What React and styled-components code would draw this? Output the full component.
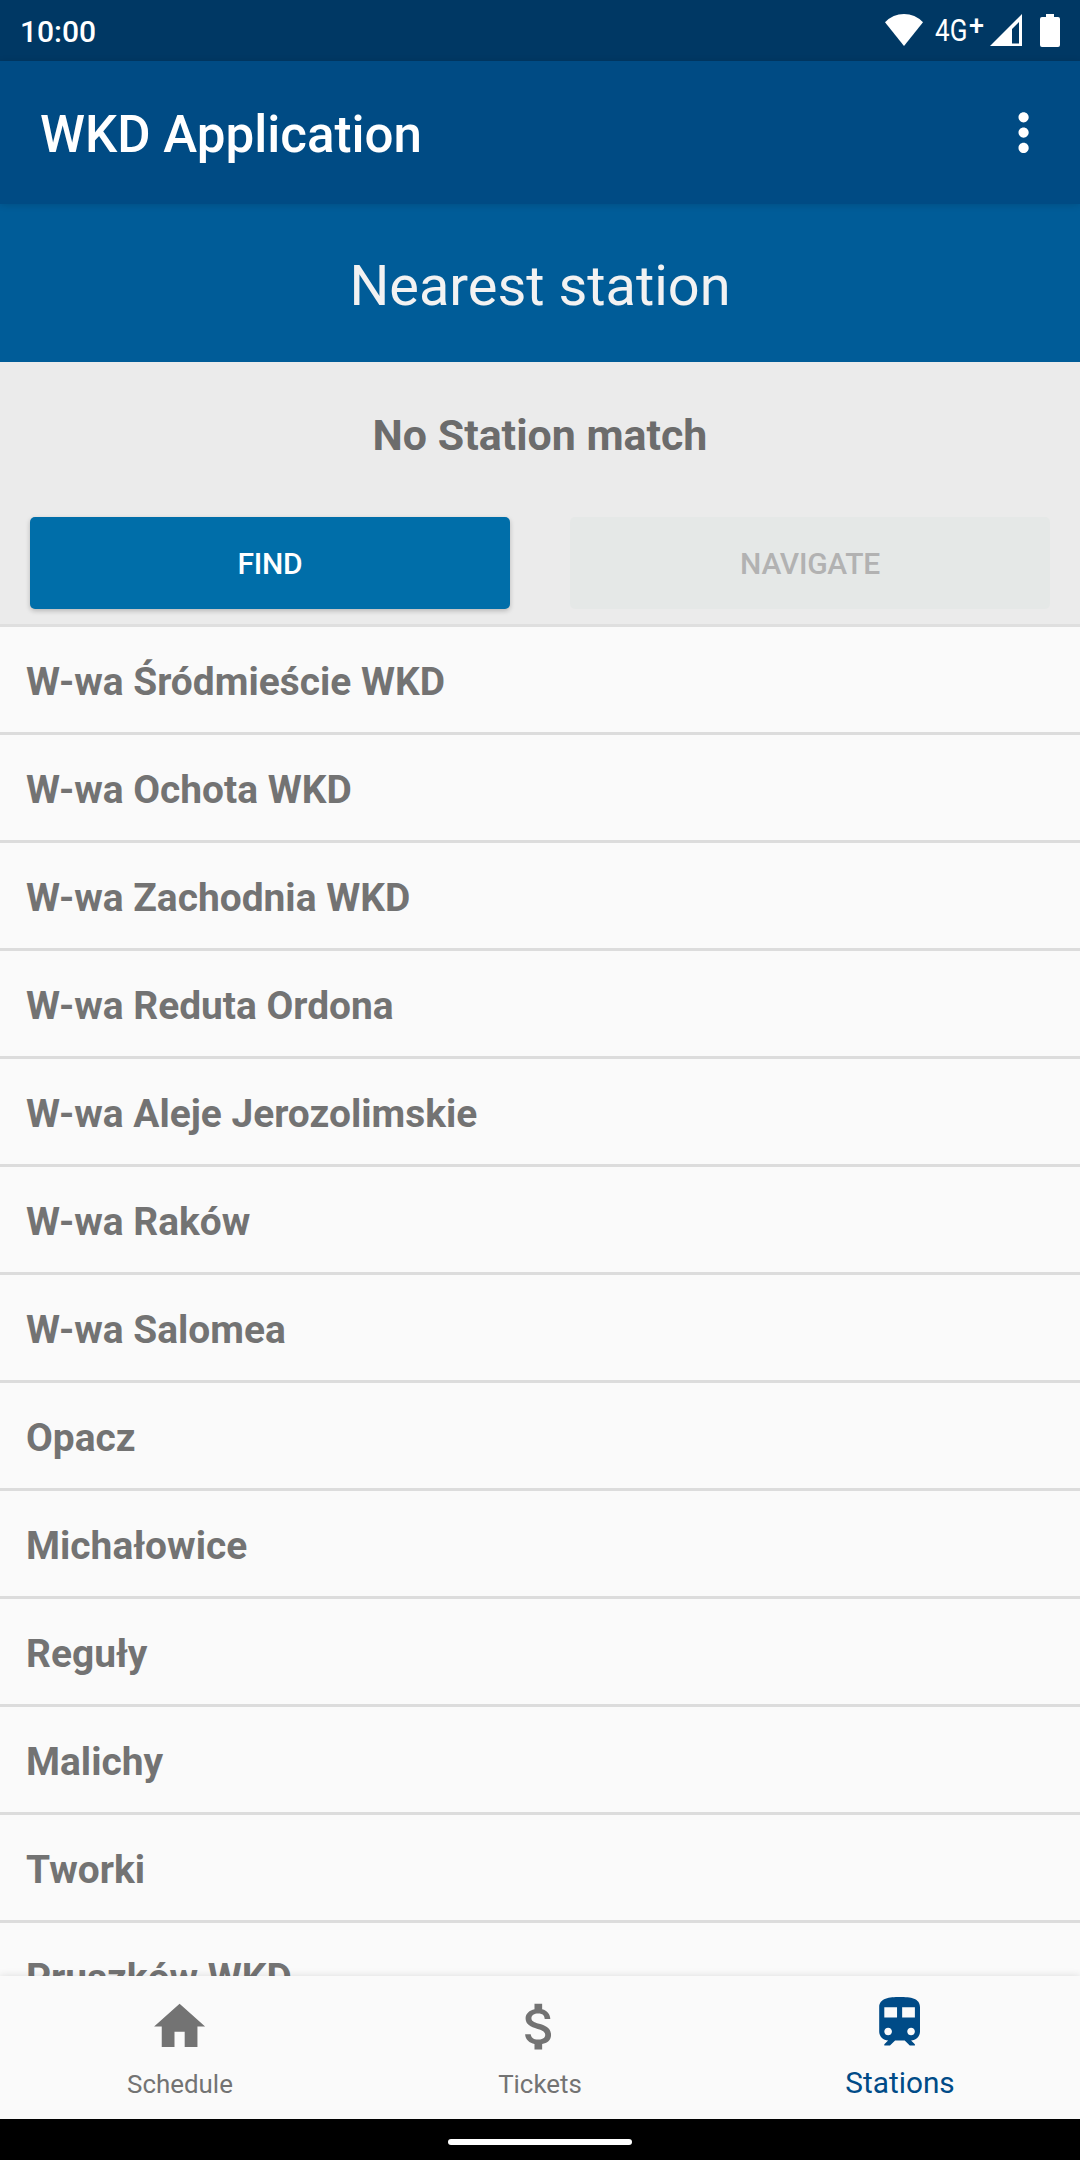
import React from 'react';
import styled, { createGlobalStyle } from 'styled-components';

const GlobalStyle = createGlobalStyle`
  * { box-sizing: border-box; }
  body { margin: 0; background: #fafafa; }
`;

const Screen = styled.div`
  display: flex;
  flex-direction: column;
  width: 1080px;
  height: 2160px;
  overflow: hidden;
  background: #fafafa;
  font-family: Roboto, 'Liberation Sans', sans-serif;
`;

const StatusBar = styled.header`
  display: flex;
  flex: none;
  align-items: flex-start;
  justify-content: space-between;
  height: 61px;
  padding: 14px 20px 0 20px;
  background: #003864;
  color: #fff;
`;

const Clock = styled.span`
  font-size: 30px;
  font-weight: 500;
  line-height: 36px;
`;

const StatusIcons = styled.div`
  display: flex;
  align-items: flex-start;

  svg { display: block; }
`;

const Network = styled.span`
  display: flex;
  width: 49px;
  margin: 0 6px 0 12px;
  line-height: 34px;
`;

const NetworkType = styled.span`
  width: 34px;
  font-size: 31px;
  transform: scaleX(0.84);
  transform-origin: left;
`;

const NetworkPlus = styled.span`
  font-size: 27px;
  font-weight: 500;
  line-height: 24px;
`;

const AppBar = styled.div`
  display: flex;
  flex: none;
  align-items: center;
  justify-content: space-between;
  height: 143px;
  padding: 0 26px 0 40px;
  background: #004b84;
  color: #fff;
  box-shadow: 0 1px 7px rgba(0, 0, 0, 0.14);
  z-index: 1;
`;

const AppTitle = styled.h1`
  margin: 4px 0 0;
  font-size: 51.1px;
  font-weight: 500;
  line-height: 60px;
`;

const MenuButton = styled.button`
  display: flex;
  padding: 0;
  border: 0;
  background: none;
  color: inherit;
`;

const SectionHeader = styled.h2`
  flex: none;
  height: 158px;
  margin: 0;
  background: #005c98;
  color: #f2f2f2;
  font-size: 55.9px;
  font-weight: 400;
  line-height: 164px;
  text-align: center;
`;

const NearestPanel = styled.section`
  flex: none;
  height: 265px;
  border-bottom: 3px solid #dfdfdf;
  background: #ebebeb;
`;

const MatchText = styled.p`
  height: 155px;
  margin: 0;
  color: #6c6c6c;
  font-size: 42.9px;
  font-weight: 700;
  line-height: 146px;
  text-align: center;
`;

const Actions = styled.div`
  display: grid;
  grid-template-columns: 480px 480px;
  justify-content: space-between;
  padding: 0 30px;
`;

const ActionButton = styled.button`
  height: 92px;
  padding: 0;
  border: 0;
  border-radius: 5px;
  background: ${(p) => (p.disabled ? '#e5e8e7' : '#006ea9')};
  color: ${(p) => (p.disabled ? '#b2b2b2' : '#fff')};
  box-shadow: ${(p) => (p.disabled ? 'none' : '0 2px 5px rgba(0, 0, 0, 0.22)')};
  font-family: inherit;
  font-size: 30px;
  font-weight: 500;
  letter-spacing: -0.25px;
`;

const StationList = styled.ul`
  flex: 1;
  min-height: 0;
  margin: 0;
  padding: 0;
  overflow: hidden;
  list-style: none;
`;

const StationRow = styled.li`
  height: 108px;
  padding: 3px 26px 0;
  border-bottom: 3px solid #dcdcdc;
  color: #737373;
  font-size: 38.9px;
  font-weight: 700;
  line-height: 104px;
`;

const BottomNav = styled.nav`
  display: grid;
  flex: none;
  grid-template-columns: repeat(3, 1fr);
  height: 143px;
  background: #fafafa;
  box-shadow: 0 0 8px rgba(0, 0, 0, 0.12);
  z-index: 1;
`;

const NavItem = styled.a`
  display: flex;
  flex-direction: column;
  align-items: center;
  padding-top: ${(p) => (p.$active ? '16px' : '20px')};
  color: ${(p) => (p.$active ? '#004b87' : '#737373')};

  svg { display: block; }
`;

const NavLabel = styled.span`
  margin-top: ${(p) => (p.$active ? '12px' : '11px')};
  font-size: ${(p) => (p.$active ? '29.8px' : '25.9px')};
  line-height: ${(p) => (p.$active ? '36px' : '32px')};
`;

const GestureBar = styled.footer`
  display: flex;
  flex: none;
  justify-content: center;
  height: 41px;
  padding-top: 20px;
  background: #000;
`;

const GesturePill = styled.div`
  width: 184px;
  height: 6px;
  border-radius: 3px;
  background: #fff;
`;

const Icon = ({ d }) => (
  <svg width="61.2" height="61.2" viewBox="0 0 24 24" fill="currentColor">
    <path d={d} />
  </svg>
);

const icons = {
  more: 'M12 8c1.1 0 2-.9 2-2s-.9-2-2-2-2 .9-2 2 .9 2 2 2zm0 2c-1.1 0-2 .9-2 2s.9 2 2 2 2-.9 2-2-.9-2-2-2zm0 6c-1.1 0-2 .9-2 2s.9 2 2 2 2-.9 2-2-.9-2-2-2z',
  home: 'M10 20v-6h4v6h5v-8h3L12 3 2 12h3v8z',
  money: 'M11.8 10.9c-2.27-.59-3-1.2-3-2.15 0-1.09 1.01-1.85 2.7-1.85 1.78 0 2.44.85 2.5 2.1h2.21c-.07-1.72-1.12-3.3-3.21-3.81V3h-3v2.16c-1.94.42-3.5 1.68-3.5 3.61 0 2.31 1.91 3.46 4.7 4.13 2.5.6 3 1.48 3 2.41 0 .69-.49 1.79-2.7 1.79-2.06 0-2.87-.92-2.98-2.1h-2.2c.12 2.19 1.76 3.42 3.68 3.83V21h3v-2.15c1.95-.37 3.5-1.5 3.5-3.55 0-2.84-2.43-3.81-4.7-4.4z',
  train: 'M12 2c-4 0-8 .5-8 4v9.5C4 17.43 5.57 19 7.5 19L6 20.5v.5h2.23l2-2H14l2 2h2v-.5L16.5 19c1.93 0 3.5-1.57 3.5-3.5V6c0-3.5-3.58-4-8-4zM7.5 17c-.83 0-1.5-.67-1.5-1.5S6.67 14 7.5 14s1.5.67 1.5 1.5S8.33 17 7.5 17zm3.5-7H6V6h5v4zm2 0V6h5v4h-5zm3.5 7c-.83 0-1.5-.67-1.5-1.5s.67-1.5 1.5-1.5 1.5.67 1.5 1.5-.67 1.5-1.5 1.5z',
};

const stations = [
  'W-wa Śródmieście WKD',
  'W-wa Ochota WKD',
  'W-wa Zachodnia WKD',
  'W-wa Reduta Ordona',
  'W-wa Aleje Jerozolimskie',
  'W-wa Raków',
  'W-wa Salomea',
  'Opacz',
  'Michałowice',
  'Reguły',
  'Malichy',
  'Tworki',
  'Pruszków WKD',
];

const tabs = [
  { label: 'Schedule', icon: icons.home },
  { label: 'Tickets', icon: icons.money },
  { label: 'Stations', icon: icons.train, active: true },
];

export default function App() {
  return (
    <Screen>
      <GlobalStyle />
      <StatusBar>
        <Clock>10:00</Clock>
        <StatusIcons>
          <svg width="38" height="32" viewBox="0 0 38 32" fill="#fff">
            <path d="M0 8.2Q8 0 19 0T38 8.2L19 32z" />
          </svg>
          <Network>
            <NetworkType>4G</NetworkType>
            <NetworkPlus>+</NetworkPlus>
          </Network>
          <svg width="32" height="32" viewBox="0 0 32 32" fill="#fff">
            <path fillRule="evenodd" d="M32 0v32H0zM29 8l-7 7v14.5h7z" />
          </svg>
          <svg width="38" height="33" viewBox="0 0 38 33" fill="#fff">
            <path d="M24 0h8v3h4a2 2 0 0 1 2 2v26a2 2 0 0 1-2 2H20a2 2 0 0 1-2-2V5a2 2 0 0 1 2-2h4z" />
          </svg>
        </StatusIcons>
      </StatusBar>
      <AppBar>
        <AppTitle>WKD Application</AppTitle>
        <MenuButton aria-label="More options">
          <Icon d={icons.more} />
        </MenuButton>
      </AppBar>
      <SectionHeader>Nearest station</SectionHeader>
      <NearestPanel>
        <MatchText>No Station match</MatchText>
        <Actions>
          <ActionButton>FIND</ActionButton>
          <ActionButton disabled>NAVIGATE</ActionButton>
        </Actions>
      </NearestPanel>
      <StationList>
        {stations.map((name) => (
          <StationRow key={name}>{name}</StationRow>
        ))}
      </StationList>
      <BottomNav>
        {tabs.map((tab) => (
          <NavItem key={tab.label} $active={tab.active}>
            <Icon d={tab.icon} />
            <NavLabel $active={tab.active}>{tab.label}</NavLabel>
          </NavItem>
        ))}
      </BottomNav>
      <GestureBar>
        <GesturePill />
      </GestureBar>
    </Screen>
  );
}
